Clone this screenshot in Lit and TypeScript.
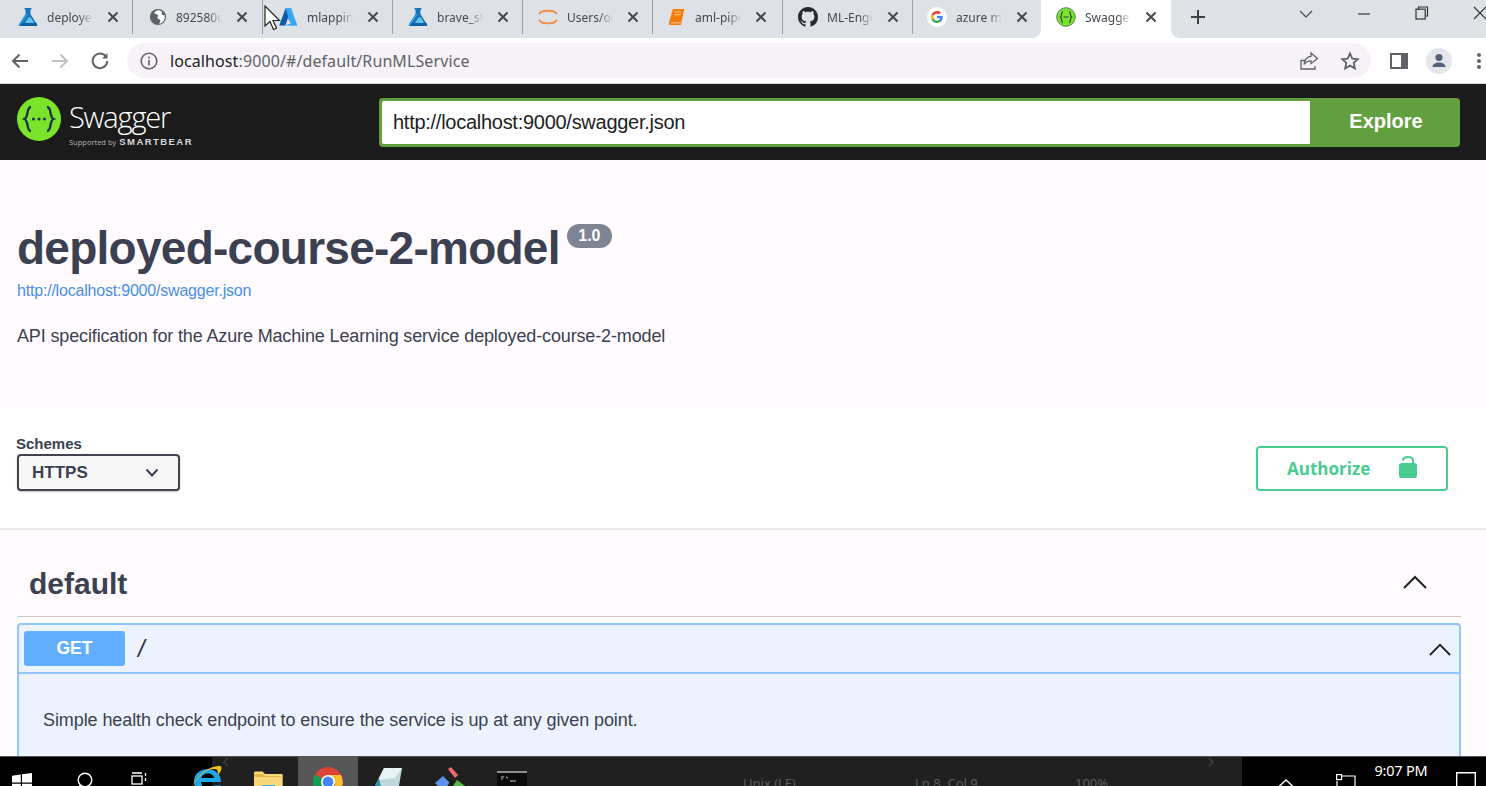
import { LitElement, css, html, svg } from 'lit'
import { customElement } from 'lit/decorators.js'

const flask = svg`<svg viewBox="0 0 20 20" width="20" height="20"><path d="M6.5 1h7v1.6h-1v4.6l6.6 10.2c.4.7 0 1.6-.9 1.6H1.8c-.9 0-1.3-.9-.9-1.6l6.6-10.2V2.6h-1z" fill="#1b74b8"/><path d="M7.5 7.2 1 17.4c-.4.7 0 1.6.8 1.6L9.6 7.2z" fill="#2aa5e0"/><path d="M10.4 10.5h2.4l3.4 5.6H7z" fill="#5ec4ee"/><path d="M1.8 19h16.4c.9 0 1.3-.9.9-1.6l-.7-1.3H4.2z" fill="#0f5fa6"/></svg>`
const globe = svg`<svg viewBox="0 0 20 20" width="18" height="18"><circle cx="10" cy="10" r="9" fill="#5f6368"/><path d="M10 2.500C8 3 6.500 4 6 5.500c.5 1.500 3 1 4 2.500S8.500 10 9.500 11.500s3 .5 3 3L11.500 17.500c3.500-.5 6-3.800 6-7.500 0-.8-.1-1.500-.3-2.200C16 8.500 15 8 14.300 7.300S15 5 14 4c-1-.8-2.500-1.500-4-1.500z" fill="#fff"/></svg>`
const azure = svg`<svg viewBox="0 0 20 20" width="20" height="20"><path d="M7.500 1.500h5.800L7.300 18.500H1.300z" fill="#0a5cab"/><path d="M14 6.500l5.200 12H6.500l7-2-4-5.200z" fill="#2a9df0"/><path d="M7.500 1.500h5.800l5.900 17H13.500z" fill="#38a7f2"/></svg>`
const jupyter = svg`<svg viewBox="0 0 20 20" width="20" height="20" fill="none" stroke="#f58a3c" stroke-width="1.800" stroke-linecap="round"><path d="M1.500 6.500C4 2.800 16 2.800 18.500 6.500"/><path d="M1.500 13.500C4 17.200 16 17.200 18.500 13.500"/></svg>`
const book = svg`<svg viewBox="0 0 20 20" width="18" height="18"><path d="M5.500 1H18l-3 15H3.500C2.400 16 2 17 3.300 17H15l-.4 2H2.800C1.200 19 .6 17.500 1 16z" fill="#f57c0b"/><path d="M7.500 4.500h7M7 7.500h7" stroke="#ffd19c" stroke-width="1"/></svg>`
const github = svg`<svg viewBox="0 0 16 16" width="20" height="20"><path fill="#24292e" d="M8 0C3.580 0 0 3.580 0 8c0 3.540 2.290 6.530 5.470 7.590.4.070.55-.17.55-.38 0-.19-.01-.82-.01-1.490-2.010.37-2.530-.49-2.690-.94-.09-.23-.48-.94-.82-1.130-.28-.15-.68-.52-.01-.53.63-.01 1.080.58 1.230.82.72 1.210 1.870.87 2.330.66.070-.52.28-.87.51-1.070-1.780-.2-3.640-.89-3.640-3.950 0-.87.31-1.590.82-2.150-.08-.2-.36-1.020.08-2.120 0 0 .67-.21 2.200.82.64-.18 1.320-.27 2-.27s1.360.09 2 .27c1.530-1.040 2.200-.82 2.200-.82.44 1.100.16 1.920.08 2.120.51.56.82 1.270.82 2.150 0 3.070-1.870 3.750-3.650 3.950.29.25.54.73.54 1.480 0 1.070-.01 1.930-.01 2.200 0 .21.15.46.55.38A8.010 8.010 0 0 0 16 8c0-4.420-3.580-8-8-8z"/></svg>`
const google = svg`<svg viewBox="0 0 24 24" width="20" height="20"><circle cx="12" cy="12" r="12" fill="#fff"/><g transform="translate(4.800 4.800) scale(.6)"><path fill="#4285f4" d="M23.500 12.300c0-.8-.1-1.600-.2-2.300H12v4.500h6.500c-.3 1.500-1.100 2.800-2.400 3.600v3h3.900c2.200-2.100 3.500-5.100 3.500-8.800z"/><path fill="#34a853" d="M12 24c3.200 0 6-1.100 8-2.900l-3.900-3c-1.100.7-2.500 1.200-4.100 1.200-3.100 0-5.800-2.100-6.700-5H1.300v3.100C3.300 21.300 7.300 24 12 24z"/><path fill="#fbbc05" d="M5.300 14.300c-.5-1.500-.5-3.100 0-4.600V6.600H1.300c-1.700 3.300-1.700 7.500 0 10.800z"/><path fill="#ea4335" d="M12 4.800c1.800 0 3.300.6 4.600 1.800l3.400-3.400C17.900 1.200 15.200 0 12 0 7.300 0 3.300 2.700 1.300 6.600l4 3.100c.9-2.800 3.600-4.900 6.700-4.900z"/></g></svg>`
const swaggerFav = svg`<svg viewBox="0 0 20 20" width="20" height="20"><circle cx="10" cy="10" r="9.300" fill="#7be32a" stroke="#5b7a5e" stroke-width="1"/><path d="M7 4.500C5 4.500 6 9.300 4.500 10 6 10.700 5 15.500 7 15.500M13 4.500c2 0 1 4.800 2.500 5.500-1.500.7-.5 5.500-2.500 5.500M7.500 10h5" fill="none" stroke="#2d4a35" stroke-width="1.200"/></svg>`

const tabs = [
  { icon: flask, title: 'deployed-course-2', x: 15 },
  { icon: globe, title: '892580c4-b3f1', x: 16 },
  { icon: azure, title: 'mlapping-demo', x: 15 },
  { icon: flask, title: 'brave_star_hd', x: 15 },
  { icon: jupyter, title: 'Users/odl_user', x: 15 },
  { icon: book, title: 'aml-pipelines', x: 15 },
  { icon: github, title: 'ML-Engineer', x: 15 },
  { icon: google, title: 'azure ml swagger', x: 14 },
]

// taskbar cells sit on a shared baseline, placed by their x from the screen edge
type Cell = { x: number; w: number; top: number; body: unknown; hot?: boolean; faint?: boolean }

const winLogo = svg`<svg viewBox="0 0 20 20" width="20" height="20" fill="#fff"><path d="M0 2.800 8.800 1.500v8H0zM10 1.300 20 0v9.500H10zM0 10.700h8.800v8L0 17.400zM10 10.700h10V20l-10-1.400z"/></svg>`
const searchIcon = svg`<svg viewBox="0 0 20 24" width="20" height="24" fill="none" stroke="#fff" stroke-width="1.400"><circle cx="12" cy="8" r="6.800"/><path d="M7.500 13 1.500 20"/></svg>`
const taskView = svg`<svg viewBox="0 0 16 20" width="16" height="20" fill="none" stroke="#fff" stroke-width="1.300"><path d="M1 1h10M1 15h10"/><rect x="1" y="4" width="10" height="8"/><path d="M14.500 1v3M14.500 6v3"/></svg>`
const ieIcon = svg`<svg viewBox="0 0 32 32" width="32" height="32"><path d="M27 17H10c.3 4 3 7 7 7 3 0 5-1 6.500-3.500H30c-2 5-7 9-13 9C9 29.500 3 24 3 16.500S9 4 17 4c7 0 13 5.500 13 13zM23.500 13c-.5-3-3-4.500-6.500-4.500S11 10 10.300 13z" fill="#1ea7e8"/><path d="M1 22C6 9 20 0 29 1c3 .5 1 6-2 9 0-3 0-6-3-6C16 3 7 11 1 22z" fill="#f6c21c"/></svg>`
const folderIcon = svg`<svg viewBox="0 0 30 24" width="30" height="24"><path d="M1 2c0-1 .5-1.500 1.500-1.500h7L12 3h16.500c.8 0 1.200.4 1.200 1.200V24H1z" fill="#f6d77a"/><path d="M1 3h9l2 2h18v1H1z" fill="#e7b93f"/><rect x="9" y="14" width="13" height="10" fill="#35a7dc"/></svg>`
const chromeIcon = svg`<svg viewBox="0 0 30 30" width="30" height="30"><circle cx="15" cy="15" r="15" fill="#db4437"/><path d="M15 15 2 7.500A15 15 0 0 0 15 30l7.500-13z" fill="#0f9d58"/><path d="M15 8h13a15 15 0 0 1-13 22l7.500-13z" fill="#fbc02d"/><circle cx="15" cy="15" r="7" fill="#fff"/><circle cx="15" cy="15" r="5.400" fill="#4285f4"/></svg>`
const phoneIcon = svg`<svg viewBox="0 0 32 24" width="32" height="24"><path d="M12 0h18l-4 24H0z" fill="#bfd7dc"/><path d="M12 0h18l-7 10L6 12z" fill="#e6f2f3"/><path d="M7 10 0 24h10z" fill="#2b8fa5"/></svg>`
const diamondIcon = svg`<svg viewBox="0 0 30 24" width="30" height="24"><path d="M8 9l7 7-7 8-8-8z" fill="#5b94ea"/><path d="M13 2l3-2 7 8-3 3z" fill="#ef6b6b"/><path d="M22 13l8 6-7 5-5-5z" fill="#58b947"/><path d="M18 15a4 4 0 1 0 4 5" fill="none" stroke="#1c1c1c" stroke-width="2"/></svg>`
const termIcon = svg`<svg viewBox="0 0 30 20" width="30" height="20"><rect width="30" height="20" fill="#0c0c0c"/><rect width="30" height="2" fill="#8d8d8d"/><path d="M4 6h3M4 8h2M9 6l2 1M13 10h6" stroke="#c8c8c8" stroke-width="1" fill="none"/></svg>`
const trayUp = svg`<svg viewBox="0 0 16 8" width="16" height="8" fill="none" stroke="#fff" stroke-width="1.400"><path d="M1 7.500 8 1l7 6.500"/></svg>`
const netIcon = svg`<svg viewBox="0 0 20 16" width="20" height="16" fill="none" stroke="#fff" stroke-width="1.200"><path d="M5 2h14v14H1V7"/><rect x=".6" y=".6" width="5" height="5" fill="#000"/></svg>`
const noteBox = svg`<svg viewBox="0 0 20 16" width="20" height="16" fill="none" stroke="#fff" stroke-width="1.400"><path d="M.7 16V.7h18.600V16"/></svg>`
const ghostL = svg`<svg viewBox="0 0 6 10" width="6" height="10" fill="none" stroke="#3a3a3a" stroke-width="1.800"><path d="M5 1 1 5l4 4"/></svg>`
const ghostR = svg`<svg viewBox="0 0 6 10" width="6" height="10" fill="none" stroke="#3a3a3a" stroke-width="1.800"><path d="m1 1 4 4-4 4"/></svg>`

const cells: Cell[] = [
  { x: 12, w: 20, top: 16, body: winLogo },
  { x: 73, w: 20, top: 15, body: searchIcon },
  { x: 131, w: 16, top: 15, body: taskView },
  { x: 191, w: 32, top: 8, body: ieIcon },
  { x: 223, w: 6, top: 0, body: ghostL },
  { x: 253, w: 30, top: 14, body: folderIcon },
  { x: 298, w: 60, top: 10, body: chromeIcon, hot: true },
  { x: 372, w: 32, top: 11, body: phoneIcon },
  { x: 435, w: 30, top: 10, body: diamondIcon },
  { x: 497, w: 30, top: 14, body: termIcon },
  { x: 743, w: 60, top: 17, body: 'Unix (LF)', faint: true },
  { x: 915, w: 70, top: 17, body: 'Ln 8, Col 9', faint: true },
  { x: 1075, w: 40, top: 17, body: '100%', faint: true },
  { x: 1208, w: 6, top: 0, body: ghostR },
  { x: 1278, w: 16, top: 22, body: trayUp },
  { x: 1336, w: 20, top: 17, body: netIcon },
]

@customElement('app-root')
export class AppRoot extends LitElement {
  static styles = css`
    :host {
      display: block;
      width: 1486px;
      height: 786px;
      overflow: hidden;
      font-family: 'Liberation Sans', sans-serif;
      color: #3b4151;
    }

    .screen {
      position: relative;
      display: flex;
      flex-direction: column;
      height: 786px;
      background: #fffbfe;
    }

    /* browser tab strip */
    .strip {
      display: flex;
      flex: none;
      height: 38px;
      padding-left: 3px;
      background: #dee1e6;
    }

    .tab {
      display: flex;
      flex: none;
      align-items: center;
      width: 130px;
      height: 34px;
      box-sizing: border-box;
      border-right: 1px solid #9ba0a6;
      margin-bottom: 4px;
    }

    .tab.before-active {
      border-right: 0;
    }

    .tab svg {
      flex: none;
    }

    .tab-title {
      flex: none;
      width: 46px;
      margin-left: 9px;
      overflow: hidden;
      white-space: nowrap;
      font: 12px 'Noto Sans', sans-serif;
      color: #45494e;
      -webkit-mask-image: linear-gradient(to right, #000 70%, transparent);
      mask-image: linear-gradient(to right, #000 70%, transparent);
    }

    .close {
      flex: none;
      margin-left: 14px;
    }

    .tab.active {
      position: relative;
      height: 38px;
      margin: 0 0 0 -2px;
      padding: 0 0 4px 15px;
      border: 0;
      background: #fff;
    }

    .tab.active::before,
    .tab.active::after {
      content: '';
      position: absolute;
      bottom: 0;
      width: 8px;
      height: 8px;
    }

    .tab.active::before {
      left: -8px;
      background: radial-gradient(circle at 0 0, #dee1e6 7.500px, #fff 8px);
    }

    .tab.active::after {
      right: -8px;
      background: radial-gradient(circle at 100% 0, #dee1e6 7.500px, #fff 8px);
    }

    .new-tab {
      display: flex;
      flex: none;
      margin: 9px 0 0 19px;
    }

    .win-controls {
      display: flex;
      margin-left: 71px;
    }

    .win-btn {
      display: flex;
      flex: none;
      justify-content: center;
      width: 58px;
      padding-top: 8px;
    }

    .win-btn.chev {
      padding-top: 9px;
    }

    .win-btn.up {
      padding-top: 6px;
    }

    /* address bar */
    .toolbar {
      display: flex;
      flex: none;
      align-items: center;
      height: 45px;
      border-bottom: 1px solid #d6d6d6;
      background: #fff;
    }

    .nav {
      display: flex;
      flex: none;
      justify-content: center;
      width: 40px;
    }

    .omnibox {
      display: flex;
      flex: none;
      align-items: center;
      width: 1244px;
      height: 35px;
      margin-left: 7px;
      border-radius: 18px;
      background: #f6f2f7;
      font: 16px 'Noto Sans', sans-serif;
      letter-spacing: 0.100px;
      color: #5f6368;
    }

    .omnibox b {
      font-weight: 400;
      color: #202124;
    }

    .site-info {
      display: flex;
      margin: 0 12px 0 13px;
    }

    .grow {
      flex: 1;
    }

    .end {
      display: flex;
      margin-right: 11px;
    }

    .end.share {
      margin-right: 21px;
    }

    .side {
      margin-left: 8px;
    }

    .avatar {
      display: flex;
      align-items: center;
      justify-content: center;
      width: 26px;
      height: 26px;
      border-radius: 50%;
      background: #e4e6ea;
    }

    /* swagger topbar */
    .topbar {
      display: flex;
      flex: none;
      align-items: center;
      height: 76px;
      padding: 0 26px 0 17px;
      box-sizing: border-box;
      background: #1b1b1b;
    }

    .brand {
      display: flex;
      flex: none;
      align-self: flex-start;
      width: 362px;
      margin-top: 13px;
    }

    .brand-text {
      margin: 4px 0 0 8px;
      color: #fff;
    }

    .brand-name {
      font: 300 29px/32px 'Open Sans', sans-serif;
      letter-spacing: -1.200px;
    }

    .brand-sub {
      display: flex;
      align-items: baseline;
      gap: 3px;
      margin-top: 3px;
      font: 7.500px/11px 'Open Sans', sans-serif;
      white-space: nowrap;
      color: #b5b5b5;
    }

    .brand-sub b {
      font: 700 9.500px/11px 'Liberation Sans', sans-serif;
      letter-spacing: 1.450px;
      color: #d9d9d9;
    }

    .explore {
      display: flex;
      flex: 1;
      height: 49px;
      border-radius: 4px;
      background: #62a03f;
    }

    .url {
      flex: 1;
      margin: 3px 0 3px 3px;
      padding-left: 11px;
      border-radius: 2px 0 0 2px;
      background: #fff;
      font: 20px/43px 'Liberation Sans', sans-serif;
      letter-spacing: -0.270px;
      color: #222;
    }

    .explore-btn {
      flex: none;
      width: 150px;
      padding-left: 2px;
      box-sizing: border-box;
      text-align: center;
      font: 700 20px/47px 'Liberation Sans', sans-serif;
      color: #fff;
    }

    /* page */
    .page {
      flex: 1;
      min-height: 0;
      overflow: hidden;
    }

    .api-info {
      height: 248px;
      padding: 60px 0 0 17px;
      box-sizing: border-box;
    }

    .title {
      display: flex;
      align-items: flex-start;
      height: 56px;
      margin: 0;
      font: 700 46px/56px 'Liberation Sans', sans-serif;
      letter-spacing: -0.740px;
    }

    .version {
      margin: 4px 0 0 7px;
      padding: 0 11.500px;
      height: 24px;
      border-radius: 12px;
      background: #7d8492;
      font: 700 16px/24px 'Liberation Sans', sans-serif;
      letter-spacing: 0;
      color: #fff;
    }

    .link {
      display: block;
      margin-top: 5px;
      font: 16px/20px 'Liberation Sans', sans-serif;
      letter-spacing: -0.200px;
      color: #4990e2;
    }

    .desc {
      margin: 25px 0 0;
      font: 18px/20px 'Liberation Sans', sans-serif;
      letter-spacing: -0.140px;
    }

    .schemes {
      display: flex;
      justify-content: space-between;
      height: 122px;
      padding: 28px 38px 0 16px;
      box-sizing: border-box;
      border-bottom: 2px solid #e8e8e8;
      background: #fff;
    }

    .schemes-label {
      font: 700 15px/16px 'Liberation Sans', sans-serif;
    }

    .select {
      display: flex;
      align-items: center;
      justify-content: space-between;
      width: 163px;
      height: 37px;
      margin: 2px 0 0 1px;
      padding: 0 19px 0 13px;
      box-sizing: border-box;
      border: 2px solid #41444e;
      border-radius: 4px;
      background: #f7f7f7;
      box-shadow: 0 1px 2px rgba(0, 0, 0, 0.25);
      font: 700 17px 'Liberation Sans', sans-serif;
    }

    .authorize {
      display: flex;
      align-items: center;
      justify-content: space-between;
      width: 192px;
      height: 45px;
      margin-top: 10px;
      padding: 0 29px;
      box-sizing: border-box;
      border: 2px solid #49cc90;
      border-radius: 4px;
      font: 700 17px 'Open Sans', sans-serif;
      color: #49cc90;
    }

    .authorize svg {
      margin-bottom: 4px;
    }

    .section {
      margin: 0 25px 0 17px;
    }

    .section-head {
      display: flex;
      align-items: center;
      justify-content: space-between;
      height: 87px;
      padding: 21px 34px 0 12px;
      box-sizing: border-box;
      border-bottom: 1px solid #c9c9ca;
      font: 700 30px 'Liberation Sans', sans-serif;
    }

    .section-head svg {
      margin-bottom: 4px;
    }

    .opblock {
      margin-top: 6px;
      border: 2px solid #93c5fb;
      border-radius: 4px;
      background: #edf3fe;
    }

    .op-head {
      display: flex;
      align-items: center;
      height: 47px;
      padding: 0 8px 0 5px;
      border-bottom: 2px solid #93c5fb;
    }

    .op-head svg {
      margin-top: 2px;
    }

    .method {
      flex: none;
      width: 101px;
      height: 35px;
      border-radius: 3px;
      background: #61affe;
      text-align: center;
      font: 700 17.500px/35px 'Liberation Sans', sans-serif;
      color: #fff;
    }

    .path {
      flex: 1;
      margin-left: 13px;
      font: italic 400 24px 'Liberation Sans', sans-serif;
      color: #2c303c;
    }

    .op-body {
      padding: 36px 0 40px 24px;
      font: 18px/20px 'Liberation Sans', sans-serif;
      letter-spacing: -0.090px;
    }

    /* windows taskbar */
    .taskbar {
      display: flex;
      flex: none;
      height: 30px;
      overflow: hidden;
      border-top: 1px solid #555;
      box-sizing: border-box;
      background: linear-gradient(to right, #000 212px, #1f201f 212px, #1f201f 1242px, #000 1242px);
    }

    .cell {
      display: flex;
      flex: none;
      justify-content: center;
      box-sizing: border-box;
      height: 60px;
    }

    .cell.hot {
      background: #565656;
    }

    .cell.faint {
      justify-content: flex-start;
      white-space: nowrap;
      font: 13px 'Noto Sans', sans-serif;
      color: #5c5c5c;
    }

    .clock {
      flex: none;
      width: 90px;
      padding-top: 2px;
      text-align: center;
      font: 14.500px/22px 'Noto Sans', sans-serif;
      letter-spacing: -0.200px;
      color: #fff;
    }

    .clock div + div {
      color: #cfcfcf;
    }

    .tray-end {
      flex: none;
      margin-left: 10px;
      padding-top: 15px;
    }

    .cursor {
      position: absolute;
      top: 5px;
      left: 264px;
    }
  `

  private closeIcon() {
    return svg`<svg class="close" viewBox="0 0 12 12" width="12" height="12" fill="none" stroke="#45494e" stroke-width="2"><path d="m1.500 1.500 9 9m0-9-9 9"/></svg>`
  }

  private renderCells() {
    let edge = 0
    return cells.map((c) => {
      const gap = c.x - edge
      edge = c.x + c.w
      const classes = `cell${c.hot ? ' hot' : ''}${c.faint ? ' faint' : ''}`
      return html`<div class=${classes} style="margin-left:${gap}px;width:${c.w}px;padding-top:${c.top}px">${c.body}</div>`
    })
  }

  render() {
    return html`
      <div class="screen">
        <div class="strip">
          ${tabs.map((t, i) => html`
            <div class="tab ${i === tabs.length - 1 ? 'before-active' : ''}" style="padding-left:${t.x}px">
              ${t.icon}
              <span class="tab-title">${t.title}</span>
              ${this.closeIcon()}
            </div>
          `)}
          <div class="tab active">
            ${swaggerFav}
            <span class="tab-title">Swagger UI</span>
            ${this.closeIcon()}
          </div>
          <div class="new-tab">
            <svg viewBox="0 0 16 16" width="16" height="16" fill="none" stroke="#3c4043" stroke-width="2"><path d="M8 1v14M1 8h14"/></svg>
          </div>
          <div class="win-controls">
            <div class="win-btn chev"><svg viewBox="0 0 14 12" width="14" height="12" fill="none" stroke="#45494e" stroke-width="1.200"><path d="m1 2 6 6 6-6"/></svg></div>
            <div class="win-btn"><svg viewBox="0 0 14 12" width="14" height="12" fill="none" stroke="#45494e" stroke-width="1.300"><path d="M1 6h12"/></svg></div>
            <div class="win-btn up"><svg viewBox="0 0 14 14" width="14" height="14" fill="none" stroke="#333" stroke-width="1.200"><path d="M3.500 3V1h9v9h-2.300"/><rect x="1" y="3.200" width="9.200" height="9.800"/></svg></div>
            <div class="win-btn up"><svg viewBox="0 0 14 14" width="14" height="14" fill="none" stroke="#333" stroke-width="1.200"><path d="m1 1 12 12M13 1 1 13"/></svg></div>
          </div>
        </div>

        <div class="toolbar">
          <div class="nav"><svg viewBox="0 0 18 18" width="18" height="18" fill="none" stroke="#5f6368" stroke-width="2"><path d="M17 9H2m6.500-6.500L2 9l6.500 6.500"/></svg></div>
          <div class="nav"><svg viewBox="0 0 18 18" width="18" height="18" fill="none" stroke="#bdc1c6" stroke-width="2"><path d="M1 9h15M9.500 2.500 16 9l-6.500 6.500"/></svg></div>
          <div class="nav"><svg viewBox="0 0 18 18" width="18" height="18" fill="none" stroke="#5f6368" stroke-width="2"><path d="M15.500 5.500A7.300 7.300 0 1 0 16.300 9"/><path d="M16.500 1v5.500H11" fill="#5f6368" stroke="none"/></svg></div>
          <div class="omnibox">
            <span class="site-info"><svg viewBox="0 0 18 18" width="18" height="18" fill="none" stroke="#5f6368" stroke-width="1.600"><circle cx="9" cy="9" r="7.800"/><path d="M9 8v5.500M9 4.500v2"/></svg></span>
            <span><b>localhost</b>:9000/#/default/RunMLService</span>
            <span class="grow"></span>
            <span class="end share"><svg viewBox="0 0 20 20" width="20" height="20" fill="none" stroke="#5f6368" stroke-width="1.300"><path d="M6 9.500H2v8.500h14v-3"/><path d="M12 2l6.500 5.500-6.500 5V9.800c-3.500 0-5.500 1.200-7 3.700C5.500 9 8 5.800 12 5.300z"/></svg></span>
            <span class="end"><svg viewBox="0 0 20 20" width="20" height="20" fill="none" stroke="#5f6368" stroke-width="1.800"><path d="m10 2.500 2.300 5.100 5.500.6-4.100 3.700 1.200 5.500-4.900-2.800-4.900 2.800 1.200-5.500-4.100-3.700 5.500-.6z"/></svg></span>
          </div>
          <div class="nav side"><svg viewBox="0 0 18 18" width="18" height="18"><path fill-rule="evenodd" d="M0 1h18v16H0zM2 3v12h9V3z" fill="#5f6368"/></svg></div>
          <div class="nav"><div class="avatar"><svg viewBox="0 0 18 18" width="18" height="18" fill="#55627a"><circle cx="9" cy="5.500" r="3.600"/><path d="M2.500 15c0-3 3-4.500 6.500-4.500s6.500 1.500 6.500 4.500z"/></svg></div></div>
          <div class="nav"><svg viewBox="0 0 6 18" width="6" height="18" fill="#5f6368"><circle cx="3" cy="3" r="2"/><circle cx="3" cy="9" r="2"/><circle cx="3" cy="15" r="2"/></svg></div>
        </div>

        <div class="topbar">
          <div class="brand">
            <svg viewBox="0 0 44 44" width="44" height="44">
              <circle cx="22" cy="22" r="22" fill="#7be32a"/>
              <path d="M14 10c-5 0-2 10-6.500 12C12 24 9 34 14 34M30 10c5 0 2 10 6.500 12C32 24 35 34 30 34" fill="none" stroke="#173647" stroke-width="2.400"/>
              <circle cx="16.500" cy="22" r="1.500" fill="#173647"/><circle cx="22" cy="22" r="1.500" fill="#173647"/><circle cx="27.500" cy="22" r="1.500" fill="#173647"/>
            </svg>
            <div class="brand-text">
              <div class="brand-name">Swagger</div>
              <div class="brand-sub"><span>Supported by</span><b>SMARTBEAR</b></div>
            </div>
          </div>
          <div class="explore">
            <div class="url">http://localhost:9000/swagger.json</div>
            <div class="explore-btn">Explore</div>
          </div>
        </div>

        <main class="page">
          <section class="api-info">
            <h1 class="title">deployed-course-2-model<span class="version">1.0</span></h1>
            <a class="link">http://localhost:9000/swagger.json</a>
            <p class="desc">API specification for the Azure Machine Learning service deployed-course-2-model</p>
          </section>

          <section class="schemes">
            <div>
              <div class="schemes-label">Schemes</div>
              <div class="select">HTTPS
                <svg viewBox="0 0 14 10" width="14" height="10" fill="none" stroke="#3b4151" stroke-width="2"><path d="m1.500 1.500 5.500 6 5.500-6"/></svg>
              </div>
            </div>
            <div class="authorize">Authorize
              <svg viewBox="0 0 18 22" width="18" height="22"><rect y="7" width="18" height="15" rx="2.500" fill="#49cc90"/><path d="M4 4.500C4 2 6.200 1 9 1s5 1 5 4v3" fill="none" stroke="#49cc90" stroke-width="2"/></svg>
            </div>
          </section>

          <section class="section">
            <div class="section-head">default
              <svg viewBox="0 0 24 14" width="24" height="14" fill="none" stroke="#222" stroke-width="2"><path d="M1 13 12 2l11 11"/></svg>
            </div>
            <div class="opblock">
              <div class="op-head">
                <div class="method">GET</div>
                <div class="path">/</div>
                <svg viewBox="0 0 24 14" width="22" height="13" fill="none" stroke="#222" stroke-width="2"><path d="M1 13 12 2l11 11"/></svg>
              </div>
              <div class="op-body">Simple health check endpoint to ensure the service is up at any given point.</div>
            </div>
          </section>
        </main>

        <footer class="taskbar">
          ${this.renderCells()}
          <div class="clock"><div>9:07 PM</div><div>3/12/2023</div></div>
          <div class="tray-end">${noteBox}</div>
        </footer>

        <svg class="cursor" viewBox="0 0 18 26" width="18" height="26"><path d="M1 1v20l5-4.500 3.500 8 3-1.300-3.500-7.700h6.500z" fill="#fff" stroke="#222" stroke-width="1.200"/></svg>
      </div>
    `
  }
}
